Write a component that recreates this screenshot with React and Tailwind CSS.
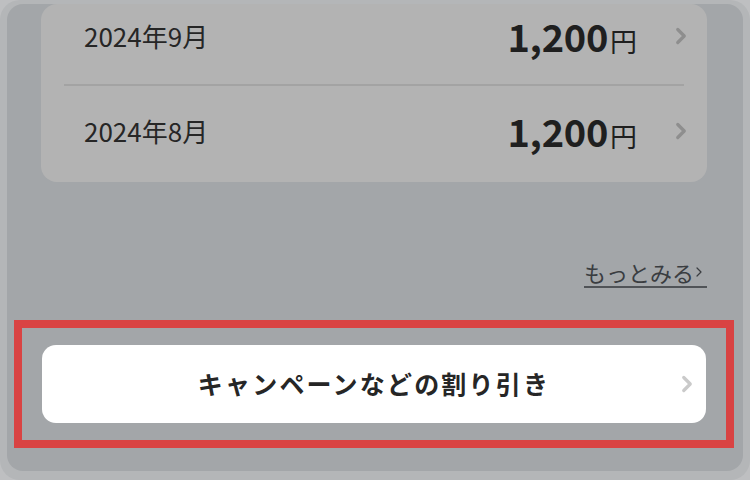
import { ChevronRight } from "lucide-react";

const font = { fontFamily: '"Noto Sans CJK JP", "Noto Sans", sans-serif' };

const rows = [
  { month: "2024年9月", amount: "1,200" },
  { month: "2024年8月", amount: "1,200" },
];

export default function App() {
  return (
    <div className="w-[750px] h-[480px] bg-[#bebfc1]" style={font}>
      <div className="h-full rounded-[20px] bg-[#b4b6b8] px-[7px] pt-[4px] pb-[9px]">
        <div className="h-full rounded-[16px] bg-[#a3a6a9] pl-[34px] pr-[36px] flex flex-col">
          {/* history card */}
          <div className="rounded-[16px] bg-[#b3b3b3] px-[23px]">
            {rows.map((r, i) => (
              <div key={i}>
                {i > 0 && <div className="h-[2px] bg-[#a3a3a3]" />}
                <div
                  className={`flex items-center pl-[20px] ${
                    i === 0 ? "h-[80px] pb-[16px]" : "h-[96px] pb-[6px]"
                  }`}
                >
                  <span className="text-[26px] text-[#262626] leading-none">{r.month}</span>
                  <span className="ml-auto flex items-baseline text-[#1f1f1f]">
                    <span className="text-[38px] font-bold leading-none tracking-[-0.3px]">{r.amount}</span>
                    <span className="text-[27px] leading-none ml-[2px]">円</span>
                  </span>
                  <ChevronRight className="ml-[31px] -mr-[10px] w-[26px] h-[26px] text-[#8e8e8e]" strokeWidth={3} />
                </div>
              </div>
            ))}
          </div>

          {/* more link */}
          <div className="mt-[76px] flex justify-end">
            <span className="inline-flex items-center border-b-[2px] border-[#505357] text-[22px] leading-[28px] text-[#3a3d41]">
              もっとみる
              <ChevronRight className="w-[16px] h-[18px] -ml-[3px]" strokeWidth={1.8} />
            </span>
          </div>

          {/* highlighted button */}
          <div className="mt-[32px] -mx-[27px] border-[8px] border-[#d94343] px-[20px] py-[17px]">
            <div className="h-[78px] rounded-[14px] bg-white flex items-center relative">
              <span className="flex-1 text-center text-[25px] font-bold tracking-[2.2px] text-[#262626]">
                キャンペーンなどの割り引き
              </span>
              <ChevronRight className="absolute right-[6px] w-[26px] h-[26px] text-[#cacaca]" strokeWidth={3} />
            </div>
          </div>
        </div>
      </div>
    </div>
  );
}
